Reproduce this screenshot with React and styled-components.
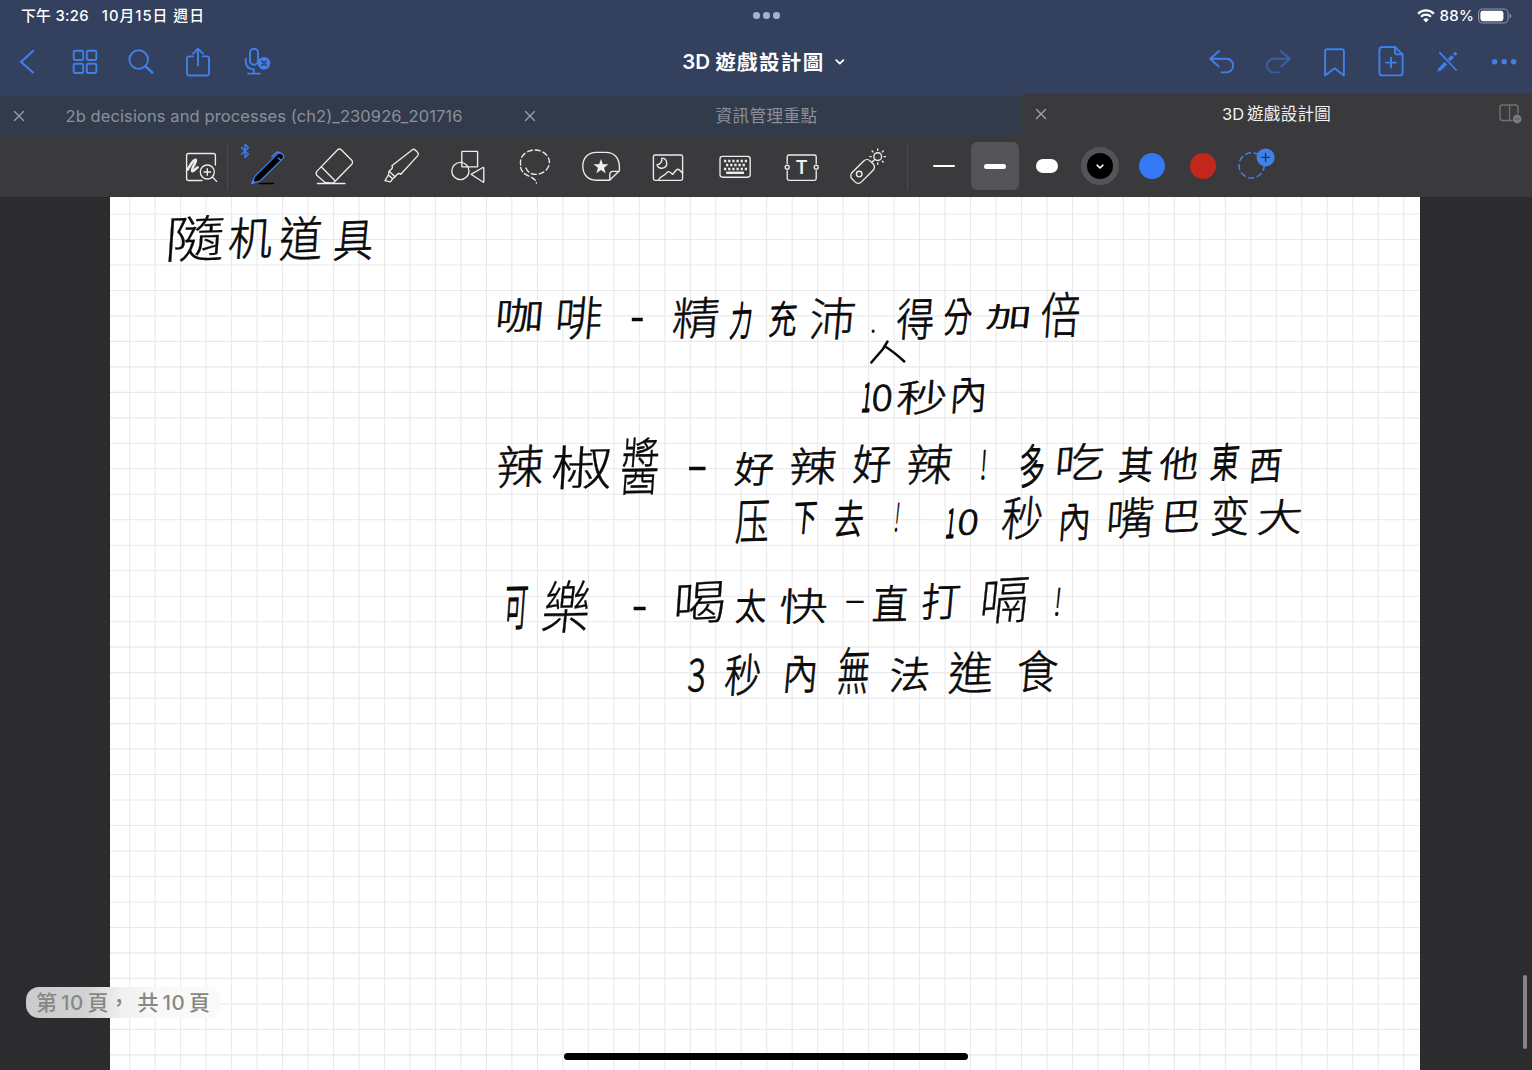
import React from "react";
import styled, { createGlobalStyle } from "styled-components";

const GlobalStyle = createGlobalStyle`
  * { box-sizing: border-box; }
  html, body { margin: 0; padding: 0; }
  body {
    background: #2c2c2e;
    font-family: Inter, "Noto Sans CJK TC", sans-serif;
    overflow: hidden;
  }
`;

const BLUE = "#4080ea";
const INK = "#0a0a0a";

const Screen = styled.div`
  width: 1532px;
  height: 1070px;
  display: flex;
  flex-direction: column;
  overflow: hidden;
  background: #2c2c2e;
`;

const Header = styled.header`
  height: 93px;
  background: #33405e;
  display: flex;
  flex-direction: column;
`;

const StatusBar = styled.div`
  height: 31px;
  display: grid;
  grid-template-columns: 1fr 40px 1fr;
  align-items: center;
  padding: 0 20px 0 21px;
  color: #fff;
`;

const Clock = styled.div`
  display: flex;
  gap: 13px;
  padding-bottom: 3px;
  font-size: 14.8px;
  font-weight: 500;
  white-space: pre;
`;

const ClockPart = styled.span`
  letter-spacing: ${(p) => p.$spacing}px;
`;

const MultitaskDots = styled.div`
  display: flex;
  justify-content: center;
  gap: 3.5px;
`;

const GreyDot = styled.i`
  width: 6.6px;
  height: 6.6px;
  border-radius: 50%;
  background: #a4b2d0;
`;

const StatusRight = styled.div`
  display: flex;
  justify-content: flex-end;
  align-items: center;
  font-size: 15px;
  font-weight: 500;
`;

const Percent = styled.span`
  margin: 0 4px 0 5px;
  letter-spacing: 0.2px;
`;

const NavBar = styled.nav`
  height: 62px;
  display: grid;
  grid-template-columns: 1fr auto 1fr;
  align-items: center;
`;

const NavGroup = styled.div`
  display: flex;
  justify-content: ${(p) => (p.$end ? "flex-end" : "flex-start")};
`;

const NavButton = styled.button`
  width: ${(p) => p.$width || 56.4}px;
  height: 60px;
  padding: 0;
  border: 0;
  background: none;
  display: flex;
  align-items: center;
  justify-content: center;
  opacity: ${(p) => (p.$faded ? 0.5 : 1)};
`;

const Title = styled.h1`
  margin: 0;
  padding: 0 0 2px 5px;
  display: flex;
  align-items: center;
  color: #fff;
  font-size: 20.5px;
  font-weight: 600;
  white-space: nowrap;
`;

const Cjk = styled.span`
  font-family: "Noto Sans CJK TC", sans-serif;
  font-weight: ${(p) => p.$weight || 400};
  letter-spacing: ${(p) => p.$spacing || 0}px;
  margin-left: ${(p) => p.$gap || 0}px;
`;

const TabStrip = styled.div`
  height: 42px;
  display: flex;
  align-items: flex-end;
  background: #33405e;
`;

const Tab = styled.div`
  height: ${(p) => (p.$active ? 42 : 39)}px;
  width: ${(p) => p.$width}px;
  display: grid;
  grid-template-columns: 38px 1fr ${(p) => p.$trailing}px;
  align-items: center;
  background: ${(p) => (p.$active ? "#3a3a3c" : "#323b4b")};
  color: ${(p) => (p.$active ? "#f2f2f4" : "#8b909b")};
  border-radius: ${(p) => (p.$active ? "4px 4px 0 0" : 0)};
  border-right: ${(p) => (p.$divided ? "1px solid #2f3d55" : "0")};
`;

const TabLabel = styled.span`
  justify-self: center;
  padding: 0 0 ${(p) => p.$lift || 0}px ${(p) => p.$indent || 0}px;
  font-size: 16.5px;
  letter-spacing: ${(p) => p.$spacing || 0}px;
  white-space: nowrap;
`;

const Toolbar = styled.div`
  height: 62px;
  background: #3a3a3c;
  display: flex;
  align-items: center;
  padding-left: 167.5px;
`;

const Tool = styled.button`
  width: 66.75px;
  height: 62px;
  padding: 0;
  border: 0;
  background: none;
  display: flex;
  align-items: center;
  justify-content: center;
`;

const Divider = styled.i`
  width: 1px;
  height: 47px;
  margin: 0 ${(p) => p.$right}px 0 ${(p) => p.$left}px;
  background: #4a4a4d;
`;

const Choice = styled.button`
  width: 48px;
  height: 48px;
  margin: 0 3.5px 0 ${(p) => (p.$spaced ? 2 : 0)}px;
  padding: 0;
  border: 0;
  border-radius: 6px;
  background: ${(p) => (p.$selected ? "#545458" : "transparent")};
  display: flex;
  align-items: center;
  justify-content: center;
`;

const Thickness = styled.i`
  width: 22px;
  height: ${(p) => p.$size}px;
  border-radius: 7px;
  background: #fff;
`;

const Swatch = styled.i`
  width: ${(p) => (p.$ring ? 38 : 26)}px;
  height: ${(p) => (p.$ring ? 38 : 26)}px;
  border-radius: 50%;
  border: ${(p) => (p.$ring ? "6px solid #545458" : "0")};
  background: ${(p) => p.$color};
  display: flex;
  align-items: center;
  justify-content: center;
`;

const Workspace = styled.main`
  position: relative;
  height: 873px;
  padding: 0 112px 0 110px;
`;

const Paper = styled.section`
  width: 1310px;
  height: 873px;
  background: #fff;
`;

const Ink = styled.svg`
  display: block;
  overflow: visible;
  font-family: "Noto Sans CJK TC", sans-serif;
  font-size: 40px;
  font-weight: 300;
`;

const PagePill = styled.div`
  position: absolute;
  left: 26px;
  top: 790px;
  width: 195px;
  height: 31px;
  border-radius: 13px;
  background: linear-gradient(90deg, #cbcbcd 0, #d2d2d4 60px, #f0f0f1 95px, #f8f8f8 130px, #fafafa 100%);
  color: #868883;
  display: flex;
  align-items: center;
  padding: 0 0 3px 10px;
  font-size: 21px;
  font-weight: 500;
  white-space: pre;
`;

const PillNumber = styled.span`
  margin: 2px 0 0 4px;
  font-size: 20.5px;
  font-weight: 500;
  letter-spacing: 0.4px;
`;

const ScrollThumb = styled.i`
  position: absolute;
  right: 5px;
  top: 778px;
  width: 4px;
  height: 74px;
  border-radius: 2px;
  background: #858587;
`;

const HomeIndicator = styled.i`
  position: absolute;
  left: 564px;
  top: 856px;
  width: 404px;
  height: 7px;
  border-radius: 4px;
  background: #000;
`;

const Glyph = styled.svg`
  flex: none;
`;

const Icon = ({ size = 44, color = BLUE, width = 1.9, children }) => (
  <Glyph
    width={size}
    height={size}
    viewBox={`${-size / 2} ${-size / 2} ${size} ${size}`}
    fill="none"
    stroke={color}
    strokeWidth={width}
    strokeLinecap="round"
    strokeLinejoin="round"
  >
    {children}
  </Glyph>
);

const Close = ({ color }) => (
  <Icon size={38} color={color} width={1.3}>
    <path d="M-4.5-4.5L4.5 4.5M4.5-4.5L-4.5 4.5" />
  </Icon>
);

const leftNav = [
  [56, <path d="M5-11L-7 0L5 10.5" strokeWidth="2.2" />],
  [57, (
    <>
      {[[-11.3, -11.3], [1.8, -11.3], [-11.3, 1.7], [1.8, 1.7]].map(([x, y]) => (
        <rect key={`${x}${y}`} x={x} y={y} width="9.5" height="9.3" rx="1.2" />
      ))}
    </>
  )],
  [56, (
    <>
      <circle cx="-2.3" cy="-2.4" r="9.3" />
      <path d="M4.6 4.4L11.2 10.5" strokeWidth="2.6" />
    </>
  )],
  [57, (
    <path d="M-5-5.6H-8.7Q-11-5.6-11-3.3V11Q-11 13.5-8.7 13.5H8.7Q11 13.5 11 11V-3.3Q11-5.6 8.7-5.6H5M0 3.5V-13M-5-8.3L0-13.3L5-8.3" />
  )],
  [62, (
    <>
      <rect x="-7" y="-13.3" width="8" height="16" rx="4" />
      <path d="M-11.3-3.2V-1Q-11.3 7-3.2 7.4M-3.2 7.4V11.5M-9 11.6H3" />
      <circle cx="7" cy="1.2" r="6.3" fill={BLUE} stroke="none" />
      <path d="M4.9-.9L9.1 3.3M9.1-.9L4.9 3.3" stroke="#33405e" strokeWidth="1.6" />
    </>
  )],
];

const rightNav = [
  [<path d="M-2.8-11L-11.8-3.2L-3.2 4.6M-11.6-3.2H4.4A6.8 6.8 0 0 1 4.4 10.4H-.5" />, false],
  [<path d="M2.8-11L11.8-3.2L3.2 4.6M11.6-3.2H-4.4A6.8 6.8 0 0 0-4.4 10.4H.5" />, true],
  [<path d="M-9.9-10.8Q-9.9-12.8-7.9-12.8H6.9Q8.9-12.8 8.9-10.8V13.4L-.5 6.2L-9.9 13.4Z" />, false],
  [(
    <>
      <path d="M4-15H-8.6Q-11.6-15-11.6-12V10.4Q-11.6 13.4-8.6 13.4H8.6Q11.6 13.4 11.6 10.4V-7.6L4-15V-10Q4-7.6 6.6-7.6H11.6" />
      <path d="M-5 .6H5M0-4.4V5.6" />
    </>
  ), false],
  [(
    <>
      <path d="M-7.2-9.3L9.2 8" strokeWidth="1.7" />
      <path d="M-9.8 9.8L-8.6 6.2L-2.4 0L.2 2.6L-6 8.6ZM.8-3.2L4.6-7L7 -4.6L3.2-.8ZM6-8.4L7.4-9.8Q8.6-10.4 9.6-9.2Q10.4-8.2 9.8-7.4L8.4-6Z" fill={BLUE} stroke="none" />
    </>
  ), false],
  [<path d="M-9.4-.3h0M.2-.3h0M9.6-.3h0" strokeWidth="5.4" />, false],
];

const star = Array.from({ length: 10 }, (_, i) => {
  const r = i % 2 ? 3.2 : 7.9;
  const a = (Math.PI / 5) * i - Math.PI / 2;
  return `${(r * Math.cos(a)).toFixed(2)},${(0.8 + r * Math.sin(a)).toFixed(2)}`;
}).join(" ");

const tools = [
  (
    <>
      <path d="M14.4-1V-10.5Q14.4-12.5 12.4-12.5H-12.4Q-14.4-12.5-14.4-10.5V12.5Q-14.4 14.5-12.4 14.5H1" />
      <path d="M-13.4 3.6C-9.5-3-7-7-5.2-6.2C-3.6-5-10.8 4-8.8 5.2C-7.4 6-5.6 2.4-3.4 1.4" strokeWidth="2.6" />
      <circle cx="6.3" cy="6" r="7" />
      <path d="M11.4 11L15.6 15.4M3 6H9.6M6.3 2.7V9.3" />
    </>
  ),
  (
    <>
      <path d="M-8.6 17.5H5.4" stroke="#000" strokeWidth="1.6" />
      <path d="M-15.6 17L-13.2 10.4L10-12.6Q11.8-14 13.8-12.2L15-11Q16.4-9.2 15-7.6L-8.2 15.2Z" fill="#000" stroke={BLUE} strokeWidth="1.3" />
      <path d="M-16.2 17.6L-13.4 16.6L-15.2 14.8ZM10.4-8L13-5.6M4-9.6L9-14Q10.2-14.4 11.4-13.4" stroke={BLUE} strokeWidth="1.5" />
      <path d="M-26.6-18.6L-19.6-11.8L-23-8.6V-21.8L-19.6-18.4L-26.6-11.8" stroke="#397be8" strokeWidth="1.5" />
    </>
  ),
  (
    <>
      <path d="M3.6-16.2Q5.4-17.8 7.2-16.2L18-5.4Q19.4-3.8 18-2L.4 16Q-2.4 18-5.2 16.6L-9 16.6L-17 9.6Q-18.6 7.8-17.2 5.4Z" />
      <path d="M-12.8.8L.8 14.4M-16.6 17.5H11" />
    </>
  ),
  (
    <>
      <path d="M11.4-16.2Q12.8-17.4 14.4-15.8L16.8-13.4Q18-11.8 16.8-10.4L-.2 8.2Q-1.8 6.8-3.8 8.4L-6 10.8L-11.8 5.2L-9.4 3Q-7.8.8-9.2-.2Z" />
      <path d="M-11.8 5.2L-12.6 9L-16 14.6L-10.6 15.8L-8.4 12.8L-6 10.8M-12.6 9L-8.4 12.8" />
    </>
  ),
  (
    <>
      <rect x="-6.2" y="-14.6" width="15.8" height="15.4" rx=".6" />
      <circle cx="-7.6" cy="5" r="8.6" />
      <path d="M3 8.3L15 1.5Q15.8 1.2 15.8 2V15.8Q15.8 16.6 15 16Z" />
    </>
  ),
  (
    <>
      <path d="M-14.2-1A14.5 12.2 0 1 1 1 8.4C-4 8.4-8 6-9.6 .6" strokeDasharray="5 3" />
      <path d="M-14.4 1.4C-13.6 6-10 8.6-5 10.6C-1 12.6 1 14.4 1.4 17" strokeDasharray="5 2.6" />
    </>
  ),
  (
    <>
      <path d="M18.4 1.5C18.4-9 12.5-13.7 5-13.7H-5C-12.5-13.7-18.2-8.5-18.2 .3S-12.5 14.2-5 14.2H8.6L18.4 4.8V.4M8.8 14V8.6Q8.8 5.4 12 5.4H18" />
      <polygon points={star} fill="#efeff0" stroke="none" />
    </>
  ),
  (
    <>
      <rect x="-14.6" y="-11" width="29.2" height="25.4" rx="1.8" />
      <path d="M-6.2-7.8A5 5 0 1 1-11-1.2A5.4 5.4 0 0 0-6.2-7.8M-9.6 14C-6.6 8.6-3.4 10.6-1.2 6.6Q.8 4.2 3.4 7.4L4.8 8.4Q8.4 3.2 9.8 3.2T14.4 7" />
    </>
  ),
  (
    <>
      <rect x="-15" y="-9.6" width="30.2" height="20.8" rx="2.6" />
      <path d="M-11-5H12M-11 3H12" strokeWidth="2.4" strokeDasharray="2.3 1.85" strokeLinecap="butt" />
      <path d="M-9-1H11" strokeWidth="2.4" strokeDasharray="2.3 1.85" strokeLinecap="butt" />
      <path d="M-8.8 6.8H9" strokeWidth="2.4" strokeLinecap="butt" />
    </>
  ),
  (
    <>
      <path d="M-14.8-2.6V-9.2Q-14.8-11-13-11H12.4Q14.2-11 14.2-9.2V-2.6M-14.8 5V12.6Q-14.8 14.4-13 14.4H12.4Q14.2 14.4 14.2 12.6V5" />
      <circle cx="-14.8" cy="1.2" r="2" />
      <circle cx="14.2" cy="1.2" r="2" />
      <text x="-.3" y="8" textAnchor="middle" fontSize="18.5" fontWeight="600" fontFamily="Inter, sans-serif" fill="#f0f0f1" stroke="none">T</text>
    </>
  ),
  (
    <>
      <rect x="-12.8" y="-6.6" width="25.6" height="13.2" rx="4.6" transform="translate(-5.4 5.4) rotate(-45)" />
      <circle cx="-8.8" cy="8" r="2.8" />
      <circle cx="9.7" cy="-9.4" r="3.9" />
      <path d="M4.6-4.4L6.8-6.6M9.7-17.2V-15.8M9.7-3V-1.8M1.8-9.4H3.2M16-9.4H17.5M4.1-15L5-14.1M15.2-15L14.3-14.1M15.2-3.9L14.3-4.8" />
    </>
  ),
];

// Each glyph: character, left, top, right and bottom of its handwritten extent.
const notes = [
  [["隨", 169, 214, 224, 263], ["机", 229, 216, 272, 260], ["道", 280, 215, 322, 262], ["具", 334, 220, 373, 262]],
  [["咖", 498, 297, 541, 334], ["啡", 558, 295, 602, 341], ["-", 631, 318, 643, 321], ["精", 673, 296, 719, 341], ["力", 731, 301, 751, 340], ["充", 770, 300, 797, 338], ["沛", 810, 296, 855, 341], [".", 871, 330, 875, 334], ["得", 897, 297, 934, 341], ["分", 944, 298, 972, 336], ["加", 987, 303, 1029, 330], ["倍", 1041, 291, 1080, 339]],
  [["1", 863, 383, 871, 412], ["0", 873, 384, 892, 412], ["秒", 897, 379, 946, 416], ["內", 953, 377, 984, 415]],
  [["辣", 497, 444, 543, 489], ["椒", 552, 444, 612, 491], ["醬", 621, 436, 659, 497], ["-", 688, 467, 706, 470], ["好", 735, 451, 774, 487], ["辣", 790, 446, 836, 486], ["好", 853, 443, 891, 484], ["辣", 907, 443, 952, 486], ["!", 981, 449, 986, 481], ["多", 1020, 443, 1044, 489], ["吃", 1058, 442, 1104, 481], ["其", 1119, 446, 1152, 484], ["他", 1159, 446, 1198, 481], ["東", 1211, 442, 1239, 482], ["西", 1250, 449, 1281, 484]],
  [["压", 736, 500, 769, 545], ["下", 794, 502, 816, 535], ["去", 835, 499, 863, 539], ["!", 895, 502, 899, 533], ["1", 947, 509, 955, 538], ["0", 959, 509, 978, 536], ["秒", 1002, 495, 1042, 541], ["內", 1061, 503, 1088, 543], ["嘴", 1109, 496, 1154, 540], ["巴", 1166, 501, 1199, 533], ["变", 1212, 495, 1249, 537], ["大", 1258, 498, 1302, 536]],
  [["可", 505, 586, 527, 631], ["樂", 543, 579, 589, 635], ["-", 633, 607, 646, 610], ["喝", 677, 581, 724, 625], ["太", 736, 588, 766, 624], ["快", 780, 587, 827, 625], ["一", 846, 600, 864, 603], ["直", 873, 584, 908, 622], ["打", 922, 582, 960, 621], ["嗝", 983, 577, 1027, 625], ["!", 1055, 587, 1060, 617]],
  [["3", 688, 658, 705, 693], ["秒", 725, 653, 760, 697], ["內", 786, 655, 815, 695], ["無", 838, 646, 869, 696], ["法", 890, 656, 929, 693], ["進", 949, 650, 993, 695], ["食", 1017, 649, 1058, 694]],
];

const probe = document.createElement("canvas").getContext("2d");
probe.font = '300 40px "Noto Sans CJK TC", sans-serif';

const PEN = 2.7;
const STEM = 1.9;

// Stretches a character so that it fills its handwritten extent, and
// thickens it so that every character looks drawn with the same pen.
const fit = ([char, x0, y0, x1, y1]) => {
  const m = probe.measureText(char);
  const w = m.actualBoundingBoxLeft + m.actualBoundingBoxRight;
  const h = m.actualBoundingBoxAscent + m.actualBoundingBoxDescent;
  const whole = h > 12;
  const grow = whole ? 1.2 : 0;
  const sx = Math.max(x1 - x0 - grow, 1) / w;
  const sy = Math.max(y1 - y0 - grow, 1) / h;
  const lean = whole ? `skewX(${-3 - (x0 % 4)}) skewY(${-1 - (x0 % 3)})` : "";
  const dx = m.actualBoundingBoxLeft - w / 2;
  const dy = m.actualBoundingBoxAscent - h / 2;
  return {
    transform: `translate(${(x0 + x1) / 2} ${(y0 + y1) / 2}) ${lean} scale(${sx} ${sy}) translate(${dx} ${dy})`,
    strokeWidth: whole && w > 12 ? Math.max(PEN / Math.sqrt(sx * sy) - STEM, 0.2) : 0.2,
  };
};

const PITCH = 25.48;
const columns = Array.from({ length: 51 }, (_, i) => 129.7 + i * PITCH);
const rows = Array.from({ length: 34 }, (_, i) => 214 + i * PITCH);

function Notes() {
  return (
    <Ink width="1310" height="873" viewBox="110 197 1310 873">
      <g stroke="#e9e9eb" strokeWidth="1.1">
        {columns.map((x) => <path key={x} d={`M${x} 197V1070`} />)}
        {rows.map((y) => <path key={y} d={`M110 ${y}H1420`} />)}
      </g>
      {notes.map((line, i) => (
        <g key={i} fill={INK} stroke={INK} strokeLinejoin="round">
          {line.map((glyph) => (
            <text key={glyph[1]} {...fit(glyph)}>{glyph[0]}</text>
          ))}
        </g>
      ))}
      <path d="M887.5 341.5L883 349L871.3 362.5M884.5 346Q894 352 904.3 361.5" fill="none" stroke={INK} strokeWidth="2.5" strokeLinecap="round" />
    </Ink>
  );
}

export default function App() {
  return (
    <Screen>
      <GlobalStyle />
      <Header>
        <StatusBar>
          <Clock>
            <ClockPart $spacing={0.3}>下午 3:26</ClockPart>
            <ClockPart $spacing={1}>10月15日 週日</ClockPart>
          </Clock>
          <MultitaskDots><GreyDot /><GreyDot /><GreyDot /></MultitaskDots>
          <StatusRight>
            <svg width="18" height="14" viewBox="0 0 18 14" fill="none" stroke="#fff" strokeWidth="2.3">
              <path d="M1.1 4.7A11.2 11.2 0 0 1 16.9 4.7M4 7.8A7 7 0 0 1 14 7.8" />
              <path d="M9 13.4L6.2 10.5Q9 8.2 11.8 10.5Z" fill="#fff" stroke="none" />
            </svg>
            <Percent>88%</Percent>
            <svg width="34" height="16" viewBox="0 0 34 16">
              <rect x=".6" y="1" width="29.4" height="14" rx="4" fill="none" stroke="#8b94a8" strokeWidth="1.1" />
              <rect x="2.4" y="2.8" width="23" height="10.4" rx="2.4" fill="#fff" />
              <path d="M31.6 5.6Q33.4 6.4 33.4 8T31.6 10.4Z" fill="#8b94a8" />
            </svg>
          </StatusRight>
        </StatusBar>
        <NavBar>
          <NavGroup>
            {leftNav.map(([width, icon], i) => (
              <NavButton key={i} $width={width}><Icon>{icon}</Icon></NavButton>
            ))}
          </NavGroup>
          <Title>
            3D<Cjk $weight={700} $spacing={1.4} $gap={5}>遊戲設計圖</Cjk>
            <Icon size={30} color="#fff" width={1.8}><path d="M-3.8-.9L-.2 2.6L3.4-.9" /></Icon>
          </Title>
          <NavGroup $end>
            {rightNav.map(([icon, faded], i) => (
              <NavButton key={i} $faded={faded}><Icon>{icon}</Icon></NavButton>
            ))}
          </NavGroup>
        </NavBar>
      </Header>
      <TabStrip>
        <Tab $width={511} $trailing={20} $divided>
          <Close color="#9ba0aa" />
          <TabLabel $spacing={0.09} $lift={0}>2b decisions and processes (ch2)_230926_201716</TabLabel>
        </Tab>
        <Tab $width={511} $trailing={38}>
          <Close color="#9ba0aa" />
          <TabLabel $lift={2}><Cjk $spacing={0.5}>資訊管理重點</Cjk></TabLabel>
        </Tab>
        <Tab $width={510} $trailing={41} $active>
          <Close color="#a5a5a8" />
          <TabLabel $lift={2} $indent={2}>3D<Cjk $spacing={0.3} $gap={3}>遊戲設計圖</Cjk></TabLabel>
          <Icon size={36} color="#707073" width={1.4}>
            <path d="M3 6.5H-6.5Q-9 6.5-9 4V-6.5Q-9-9-6.5-9H6.5Q9-9 9-6.5V-1M.6-9V6.5" />
            <circle cx="8.2" cy="5" r="4.4" fill="#7b7b7e" stroke="none" />
            <path d="M6.2 5h0M8.2 5h0M10.2 5h0" stroke="#3a3a3c" strokeWidth="1.2" />
          </Icon>
        </Tab>
      </TabStrip>
      <Toolbar>
        {tools.map((icon, i) => (
          <React.Fragment key={i}>
            <Tool><Icon size={60} color="#ececee" width={1.35}>{icon}</Icon></Tool>
            {i === 0 && <Divider $left={-7.5} $right={6.5} />}
          </React.Fragment>
        ))}
        <Divider $left={5} $right={11.8} />
        <Choice><Thickness $size={2} /></Choice>
        <Choice $selected><Thickness $size={5} /></Choice>
        <Choice><Thickness $size={14} /></Choice>
        <Choice $spaced>
          <Swatch $ring $color="#000">
            <Icon size={20} color="#fff" width={1.6}><path d="M-2.9-.8L0 2L2.9-.8" /></Icon>
          </Swatch>
        </Choice>
        <Choice><Swatch $color="#3478f6" /></Choice>
        <Choice><Swatch $color="#c1281b" /></Choice>
        <Choice>
          <Icon width={1.5}>
            <circle cx="-3.4" cy="-.6" r="12.6" strokeDasharray="5 3.8" />
            <circle cx="10.6" cy="-8.6" r="9" fill={BLUE} stroke="none" />
            <path d="M6.6-8.6H14.6M10.6-12.6V-4.6" stroke="#343438" strokeWidth="1.4" />
          </Icon>
        </Choice>
      </Toolbar>
      <Workspace>
        <Paper><Notes /></Paper>
        <PagePill>
          <Cjk $weight={500}>第</Cjk>
          <PillNumber>10</PillNumber>
          <Cjk $weight={500} $gap={4}>頁，</Cjk>
          <Cjk $weight={500} $gap={8}>共</Cjk>
          <PillNumber>10</PillNumber>
          <Cjk $weight={500} $gap={4}>頁</Cjk>
        </PagePill>
        <ScrollThumb />
        <HomeIndicator />
      </Workspace>
    </Screen>
  );
}
